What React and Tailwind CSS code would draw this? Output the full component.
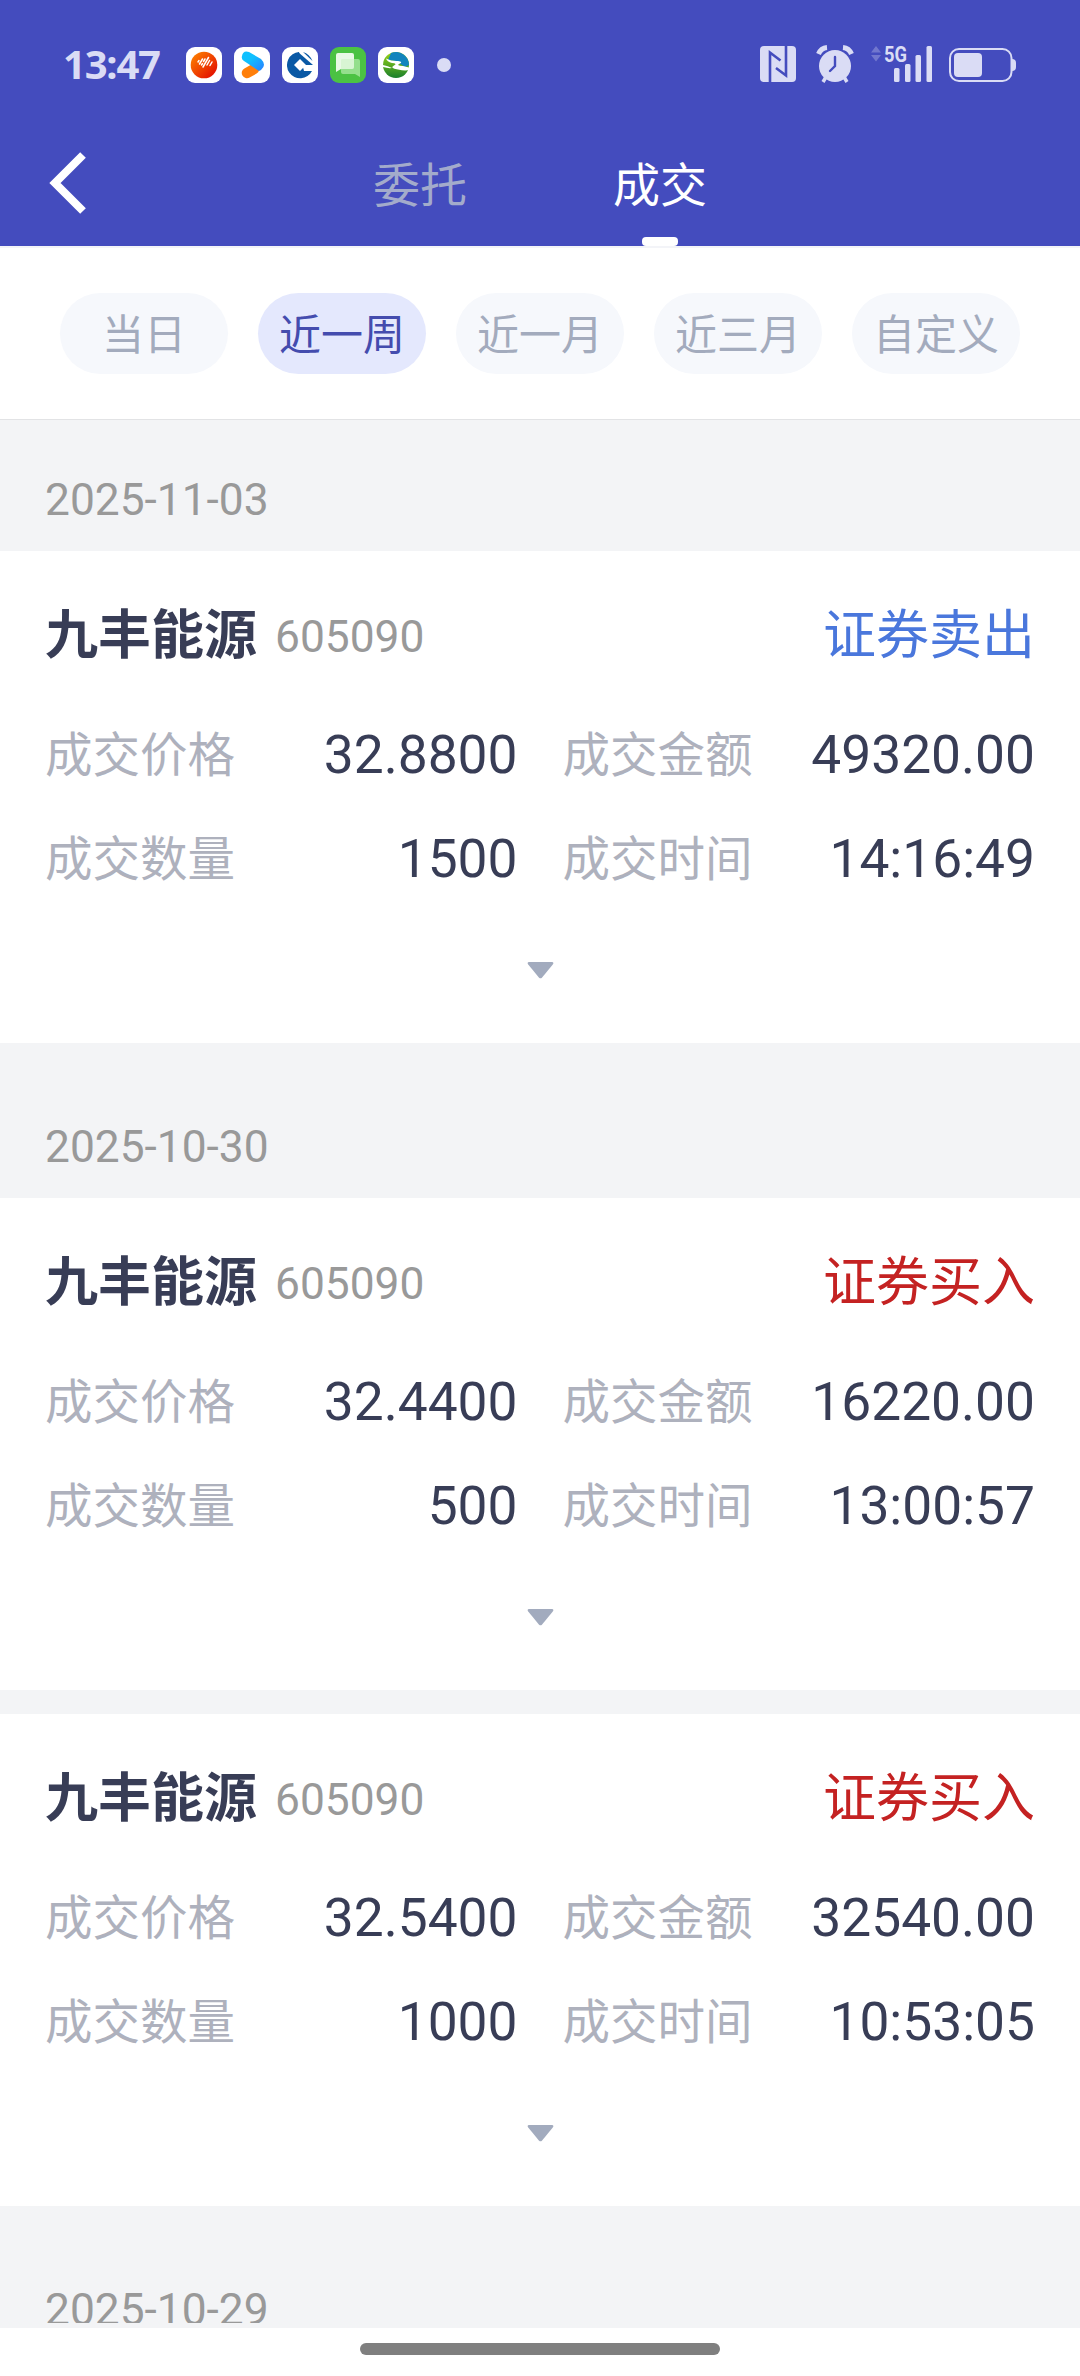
import { useState } from 'react'

const RANGES = ['当日', '近一周', '近一月', '近三月', '自定义']

const GROUPS = [
  {
    date: '2025-11-03',
    deals: [
      { name: '九丰能源', code: '605090', side: 'sell', price: '32.8800', amount: '49320.00', qty: '1500', time: '14:16:49' },
    ],
  },
  {
    date: '2025-10-30',
    deals: [
      { name: '九丰能源', code: '605090', side: 'buy', price: '32.4400', amount: '16220.00', qty: '500', time: '13:00:57' },
      { name: '九丰能源', code: '605090', side: 'buy', price: '32.5400', amount: '32540.00', qty: '1000', time: '10:53:05' },
    ],
  },
  { date: '2025-10-29', deals: [] },
]

export default function App() {
  const [range, setRange] = useState('近一周')

  return (
    <div className="flex h-[2376px] w-[1080px] flex-col overflow-hidden bg-white font-['Roboto','Noto_Sans_CJK_SC',sans-serif]">
      <header className="h-[246px] shrink-0 bg-[#444cbe]">
        <StatusBar />
        <NavBar />
      </header>

      <div className="flex h-[173px] shrink-0 gap-[30px] border-t-2 border-[#f3f4f8] px-[60px] pt-[45px]">
        {RANGES.map((r) => (
          <button key={r} onClick={() => setRange(r)}
            className={`flex h-[81px] w-[168px] items-center justify-center rounded-full pt-[5px] text-[42px] leading-none whitespace-nowrap ${r === range ? 'bg-[#e4e8fd] text-[#444cae]' : 'bg-[#f6f8fc] text-[#a3abbd]'}`}>
            {r}
          </button>
        ))}
      </div>

      <main className="h-[1909px] shrink-0 overflow-hidden border-t border-[#e2e3e5] bg-[#f3f4f6]">
        {GROUPS.map((g, i) => (
          <section key={g.date} className={i > 0 ? 'pt-[24px]' : ''}>
            <h2 className="h-[131px] pt-[53px] pl-[45px] text-[44.3px] leading-[54px] text-[#999999]">
              {/* the last row is cut off by the scroll area */}
              <span className={g.deals.length ? 'block' : 'block h-[40px] overflow-hidden'}>{g.date}</span>
            </h2>
            <div className="flex flex-col gap-[24px]">
              {g.deals.map((d) => <Deal key={d.time} deal={d} />)}
            </div>
          </section>
        ))}
      </main>

      <footer className="flex h-[48px] shrink-0 justify-center bg-white pt-[15px]">
        <div className="h-[12px] w-[360px] rounded-full bg-[#7f7f7f]" />
      </footer>
    </div>
  )
}

function NavBar() {
  return (
    <nav className="flex h-[120px]">
      <button className="flex w-[372px] items-start pt-[25px] pl-[48px]">
        <svg className="h-[64px] w-[40px]" viewBox="0 0 40 64" fill="none" stroke="#fff" strokeWidth="8">
          <path d="M35 4 L7 32 L35 60" />
        </svg>
      </button>
      <div className="flex gap-[144px] text-[47px] leading-[120px]">
        <span className="w-[96px] text-center text-[#a3abcb]">委托</span>
        <div className="relative w-[96px] text-center text-white">
          成交
          <span className="absolute bottom-0 left-[30px] h-[9px] w-[36px] rounded-[4px] bg-white" />
        </div>
      </div>
    </nav>
  )
}

function Deal({ deal }) {
  const sell = deal.side === 'sell'
  return (
    <article className="h-[492px] bg-white px-[45px] pt-[52px]">
      <div className="flex h-[66px] items-center">
        <span className="text-[53px] leading-none font-bold text-[#383d56]">{deal.name}</span>
        <span className="mt-[2px] ml-[18px] text-[44.3px] leading-none text-[#999999]">{deal.code}</span>
        <span className={`ml-auto text-[53px] leading-none ${sell ? 'text-[#4a77dc]' : 'text-[#c42222]'}`}>
          {sell ? '证券卖出' : '证券买入'}
        </span>
      </div>
      <dl className="mt-[35px] grid grid-cols-2 gap-x-[45px]">
        <Field label="成交价格" value={deal.price} />
        <Field label="成交金额" value={deal.amount} />
        <Field label="成交数量" value={deal.qty} />
        <Field label="成交时间" value={deal.time} />
      </dl>
      <svg className="mx-auto mt-[50px] h-[17px] w-[27px]" viewBox="0 0 28 18" fill="#a2abbe">
        <path d="M1.5 0 H26.5 Q28.5 0.6 27 2.6 L15.5 16.6 Q14 18 12.5 16.6 L1 2.6 Q-0.5 0.6 1.5 0 Z" />
      </svg>
    </article>
  )
}

function Field({ label, value }) {
  return (
    <div className="flex h-[104px] items-center justify-between">
      <dt className="pt-[2px] text-[47.5px] leading-none text-[#aeb1bd]">{label}</dt>
      <dd className="text-[53.3px] leading-none text-[#383d56]">{value}</dd>
    </div>
  )
}

function StatusBar() {
  return (
    <div className="flex h-[126px] items-start pt-[46px] pr-[63px] pl-[63px] text-[#dadcf5]">
      <span className="mt-[-2px] w-[123px] font-['Noto_Sans',sans-serif] text-[40px] leading-[40px] font-bold tracking-[-1.2px]">13:47</span>
      <div className="mt-px flex gap-[12px]">
        <svg className="size-[36px]" viewBox="0 0 36 36">
          <defs>
            <linearGradient id="fire" x1="0" y1="0" x2="1" y2="1">
              <stop offset="0" stopColor="#ff8a00" />
              <stop offset="1" stopColor="#e00000" />
            </linearGradient>
          </defs>
          <rect width="36" height="36" rx="9" fill="#fff" />
          <circle cx="18" cy="18" r="13.3" fill="url(#fire)" />
          <path d="M13 13.5 L12 15 M16.5 12 L13.5 17 M19 12 L17.5 14.5 M16.5 16.5 L15.5 18 M22.5 10.5 L17 20 M23.5 13.5 L21 18 M26 15 L24 18.5" fill="none" stroke="#fff" strokeWidth="1.5" strokeLinecap="round" />
        </svg>
        <svg className="size-[36px]" viewBox="0 0 36 36">
          <defs>
            <linearGradient id="play" x1="0" y1="0" x2="1" y2="1">
              <stop offset=".4" stopColor="#0fc0ff" />
              <stop offset="1" stopColor="#2b7cff" />
            </linearGradient>
          </defs>
          <rect width="36" height="36" rx="9" fill="#fff" />
          <path d="M13 26 L20 22" stroke="#ff7f0a" strokeWidth="10.5" strokeLinecap="round" />
          <path d="M8 9 Q9 3 15 5 L27 12 Q33 18 27 23 L25 24 L10 14 Q7 12 8 9 Z" fill="url(#play)" />
        </svg>
        <svg className="size-[36px]" viewBox="0 0 36 36">
          <rect width="36" height="36" rx="9" fill="#fff" />
          <path d="M17 5 A13.2 13.2 0 1 0 30 24 H22 Z" fill="#0a59a5" />
          <path d="M16 4.9 L31 18 H20 Z" fill="#0a59a5" />
          <path d="M21 5 Q27.5 7 30.5 14 Z" fill="#0a59a5" />
          <path d="M18 12 L24 18 L18 24 L12 18 Z" fill="#fff" />
          <path d="M23 18.5 H33 V20 H23 Z" fill="#fff" />
        </svg>
        <svg className="size-[36px]" viewBox="0 0 36 36">
          <rect width="36" height="36" rx="9" fill="#4bc243" />
          <path d="M8 6 H22 Q24 6 24 8 V20 Q24 22 22 22 H11 L6 25 V8 Q6 6 8 6 Z" fill="#e9f9e6" />
          <path d="M13 12 H28 Q30 12 30 14 V30 L25 27 H13 Q11 27 11 25 V14 Q11 12 13 12 Z" fill="#b4ebab" opacity=".7" />
          <path d="M11 14 Q11 12 13 12 H24 V20 Q24 22 22 22 H11 Z" fill="#e9f9e6" opacity=".55" />
        </svg>
        <svg className="size-[36px]" viewBox="0 0 36 36">
          <defs>
            <linearGradient id="leaf" x1="0" y1="0" x2="0" y2="1">
              <stop offset="0" stopColor="#9bd414" />
              <stop offset="1" stopColor="#197f2c" />
            </linearGradient>
          </defs>
          <rect width="36" height="36" rx="9" fill="#fff" />
          <circle cx="18" cy="18" r="13" fill="url(#leaf)" />
          <path d="M13 6 A13 13 0 0 1 31 18 L27 20 L18 14 L10 13 Z" fill="#1184bd" />
          <path d="M8 11.5 Q14 14.5 20 14 Q26 15 21 17 Q18 18.5 25 19 L31 20.5 V23 Q27 24 20 22.5 Q11 21 16 18.5 Q20 16.5 14 16 Q9 14.5 8 11.5 Z" fill="#fff" />
          <path d="M5 18 Q10 19 14 21 Q10 21.5 5 20 Z" fill="#fff" />
        </svg>
      </div>
      <span className="mt-[12px] ml-[23px] size-[14px] rounded-full bg-[#dadcf5]" />

      <svg className="ml-auto size-[36px]" viewBox="0 0 36 36">
        <rect width="36" height="36" rx="4" fill="currentColor" />
        <path d="M10 36 V6.5 L20.5 14.5 M26 0 V29.5 L16 22" fill="none" stroke="#444cbe" strokeWidth="2.6" />
      </svg>
      <svg className="mt-[-1px] ml-[20px] h-[38px] w-[38px]" viewBox="0 0 38 38">
        <circle cx="19" cy="21" r="16" fill="currentColor" />
        <path d="M2.5 8 Q5 2 11 1.5 M35.5 8 Q33 2 27 1.5" transform="translate(0 1)" fill="none" stroke="currentColor" strokeWidth="5" />
        <path d="M10 32 L7 37 M28 32 L31 37" stroke="currentColor" strokeWidth="3.5" />
        <path d="M19 12 V21 L14 26" fill="none" stroke="#444cbe" strokeWidth="2.4" strokeLinecap="round" />
      </svg>
      <svg className="mt-[-6px] ml-[17px] h-[43px] w-[62px]" viewBox="0 -6 62 43" fill="currentColor">
        <path d="M0 6.5 L5 0 L10 6.5 Z M0 9 L10 9 L5 15.5 Z" opacity=".3" />
        <text x="13" y="15.5" fontSize="22" fontWeight="700" textLength="23" lengthAdjust="spacingAndGlyphs" fontFamily="Roboto, sans-serif">5G</text>
        <rect x="23" y="22" width="5.5" height="14" rx="1.5" />
        <rect x="34" y="18" width="5.5" height="18" rx="1.5" />
        <rect x="44.5" y="9" width="5.5" height="27" rx="1.5" />
        <rect x="55.5" y="0" width="5.5" height="36" rx="1.5" />
      </svg>
      <svg className="mt-[2px] ml-[16px] h-[34px] w-[68px]" viewBox="0 0 68 34">
        <rect x="1" y="1" width="61.5" height="32" rx="9" fill="none" stroke="currentColor" strokeWidth="2" />
        <rect x="5" y="5" width="28" height="24" rx="4" fill="currentColor" />
        <path d="M63 11 Q67 11 67 15 V19 Q67 23 63 23 Z" fill="currentColor" />
      </svg>
    </div>
  )
}
